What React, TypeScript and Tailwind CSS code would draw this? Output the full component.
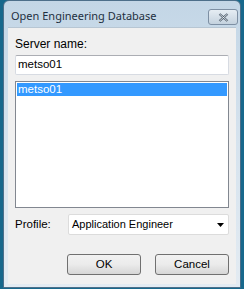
import React from "react";

const ui = { fontFamily: '"Liberation Sans", Arial, sans-serif' };
const title = { fontFamily: '"Noto Sans", "Open Sans", sans-serif' };

function CloseIcon() {
  return (
    <svg width="11" height="9" viewBox="0 0 11 9">
      <path d="M1.5 1 L9.5 8 M9.5 1 L1.5 8" stroke="#4a5a6a" strokeWidth="2.2" />
      <path d="M1.5 1 L9.5 8 M9.5 1 L1.5 8" stroke="#f4f6f8" strokeWidth="0.8" />
    </svg>
  );
}

export default function App() {
  return (
    <div className="w-[244px] h-[289px] bg-[#17688c] overflow-hidden" style={ui}>
      <div className="ml-[3px] w-[238px] h-[288px] flex flex-col rounded-t-[6px] border border-[#4d6f8a] bg-gradient-to-b from-[#c3d6e6] via-[#d6e3ee] to-[#e3ebf2]">
        {/* title bar */}
        <div className="h-[26px] flex items-center justify-between pl-[7px] pr-[2px] pt-[2px]">
          <span className="text-[11px] text-[#1e2f40] leading-none" style={title}>
            Open Engineering Database
          </span>
          <div className="w-[30px] h-[16px] mt-[4px] flex items-center justify-center rounded-[3px] border border-[#7d8fa3] bg-gradient-to-b from-[#e6edf3] to-[#c4d2de]">
            <CloseIcon />
          </div>
        </div>

        {/* client area */}
        <div className="mx-[4px] mb-[3px] flex-1 flex flex-col bg-[#f0f0f0] border-t border-[#b7c6d3] px-[7px]">
          <div className="mt-[9px] text-[12px] leading-[14px] text-black">Server name:</div>

          <div className="mt-[4px] h-[20px] flex items-center rounded-[2px] border border-[#d7dbe2] border-t-[#abadb3] bg-white pl-[2px] text-[11.5px] text-black">
            metso01
          </div>

          <div className="mt-[6px] h-[127px] border border-[#828790] bg-white p-[1px]">
            <div className="h-[13px] flex items-center bg-[#3399ff] pl-[1px] text-[11.5px] text-white leading-none">
              metso01
            </div>
          </div>

          <div className="mt-[6px] flex items-center">
            <span className="w-[53px] text-[11.5px] text-black">Profile:</span>
            <div className="flex-1 h-[21px] flex items-center justify-between rounded-[2px] border border-[#dcdcdc] bg-white pl-[3px] pr-[4px] text-[11px] text-black">
              <span>Application Engineer</span>
              <svg width="7" height="4" viewBox="0 0 7 4">
                <path d="M0 0 H7 L3.5 4 Z" fill="#000" />
              </svg>
            </div>
          </div>

          <div className="mt-[19px] flex justify-end gap-[14px]">
            <button className="w-[74px] h-[21px] rounded-[3px] border border-[#707070] bg-gradient-to-b from-[#f2f2f2] via-[#ebebeb] to-[#d6d6d6] text-[11.5px] text-black">
              OK
            </button>
            <button className="w-[74px] h-[21px] rounded-[3px] border border-[#707070] bg-gradient-to-b from-[#f2f2f2] via-[#ebebeb] to-[#d6d6d6] text-[11.5px] text-black">
              Cancel
            </button>
          </div>
        </div>
      </div>
    </div>
  );
}
